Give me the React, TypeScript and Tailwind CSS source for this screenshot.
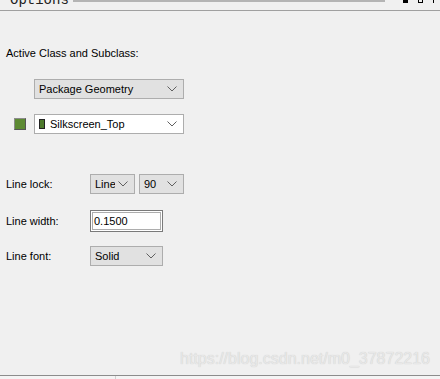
import React from 'react';

const Chevron = () => (
  <svg width="10" height="6" viewBox="0 0 10 6" className="shrink-0">
    <polyline points="0.5,0.5 5,5 9.5,0.5" fill="none" stroke="#606060" strokeWidth="1" />
  </svg>
);

type SelectProps = {
  value: string;
  width: string;
  white?: boolean;
  swatch?: boolean;
};

const Select = ({ value, width, white, swatch }: SelectProps) => (
  <div
    className={`${width} h-[20px] flex items-center pl-[4px] pr-[6px] border border-[#adadad] ${
      white ? 'bg-white' : 'bg-[#e1e1e1]'
    }`}
  >
    <div className="flex-1 min-w-0 flex items-center gap-[5px] overflow-hidden whitespace-nowrap mr-[3px]">
      {swatch && <span className="shrink-0 w-[6px] h-[10px] bg-[#4e7a2d] border border-[#222]" />}
      <span>{value}</span>
    </div>
    <Chevron />
  </div>
);

export default function App() {
  return (
    <div className="w-[440px] h-[379px] bg-[#f0f0f0] text-[11px] text-black overflow-hidden flex flex-col" style={{ fontFamily: '"Liberation Sans", Arial, sans-serif' }}>
      {/* title strip */}
      <div className="h-[10px] flex items-start overflow-hidden">
        <span className="ml-[10px] -mt-[8px] text-[14px] leading-[16px] text-[#222]" style={{ fontFamily: '"Liberation Mono", monospace' }}>
          Options
        </span>
        <div className="ml-[4px] w-[312px] h-[2px] bg-[#b4b4b4]" />
        <div className="ml-auto mr-[2px] flex items-start gap-[10px]">
          <span className="w-[5px] h-[3px] bg-black" />
          <span className="w-[5px] h-[3px] border border-black border-t-0" />
          <span className="w-[5px] h-[3px] border-l border-black" />
        </div>
      </div>

      <div className="flex-1 border-t border-[#a0a0a0] flex flex-col">
        <div className="ml-[6px] mt-[36px] leading-[13px]">Active Class and Subclass:</div>

        <div className="ml-[34px] mt-[19px]">
          <Select value="Package Geometry" width="w-[150px]" />
        </div>

        <div className="mt-[15px] flex items-center">
          <span className="ml-[14px] w-[12px] h-[12px] bg-[#5d8a33] border border-[#8c8c8c] border-r-[#555] border-b-[#555]" />
          <div className="ml-[8px]">
            <Select value="Silkscreen_Top" width="w-[150px]" white swatch />
          </div>
        </div>

        <div className="mt-[40px] flex items-center">
          <span className="w-[90px] pl-[6px]">Line lock:</span>
          <Select value="Line" width="w-[45px]" />
          <div className="ml-[4px]">
            <Select value="90" width="w-[45px]" />
          </div>
        </div>

        <div className="mt-[16px] flex items-center">
          <span className="w-[90px] pl-[6px]">Line width:</span>
          <div className="w-[73px] h-[22px] border border-[#7a7a7a] bg-white p-[1px]">
            <div className="h-full border border-[#adadad] px-[1px] flex items-center">0.1500</div>
          </div>
        </div>

        <div className="mt-[14px] flex items-center">
          <span className="w-[90px] pl-[6px]">Line font:</span>
          <Select value="Solid" width="w-[73px]" />
        </div>

        <div className="mt-auto mb-[7px] pr-[10px] text-right text-[16px] leading-[18px] text-[#e8e8e8]" style={{ textShadow: '0 0 1px #c4c4c4' }}>
          https://blog.csdn.net/m0_37872216
        </div>
      </div>

      <div className="h-[4px] border-t border-[#8c8c8c] bg-[#f4f4f4] flex">
        <div className="w-[116px] border-r border-[#d0d0d0]" />
      </div>
    </div>
  );
}
